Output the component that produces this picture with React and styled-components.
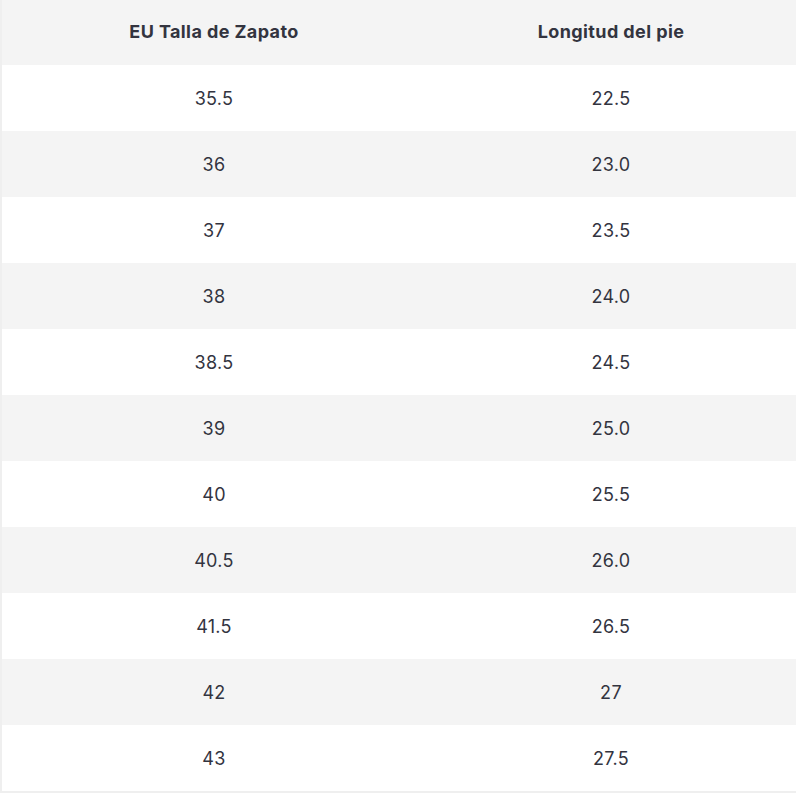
import React from "react";
import styled, { createGlobalStyle } from "styled-components";

const GlobalStyle = createGlobalStyle`
  body {
    margin: 0;
    background: #ffffff;
    font-family: Inter, "Noto Sans", sans-serif;
  }
`;

const Table = styled.div`
  width: 794px;
  border-left: 2px solid #efefef;
  border-bottom: 2px solid #efefef;
  display: grid;
  grid-template-columns: 424px 370px;
`;

const Cell = styled.div`
  height: ${(p) => (p.head ? "65px" : "66px")};
  display: flex;
  align-items: center;
  justify-content: center;
  padding-bottom: ${(p) => (p.head ? "2px" : "0")};
  box-sizing: border-box;
  background: ${(p) => (p.shaded ? "#f4f4f4" : "#ffffff")};
  color: #33343f;
  font-size: 18px;
  letter-spacing: ${(p) => (p.head ? "0.4px" : "0.3px")};
  font-weight: ${(p) => (p.head ? 700 : 400)};
`;

const rows = [
  ["35.5", "22.5"],
  ["36", "23.0"],
  ["37", "23.5"],
  ["38", "24.0"],
  ["38.5", "24.5"],
  ["39", "25.0"],
  ["40", "25.5"],
  ["40.5", "26.0"],
  ["41.5", "26.5"],
  ["42", "27"],
  ["43", "27.5"],
];

const App = () => {
  return (
    <>
      <GlobalStyle />
      <Table>
        <Cell head shaded>EU Talla de Zapato</Cell>
        <Cell head shaded>Longitud del pie</Cell>
        {rows.map(([eu, len], i) => (
          <React.Fragment key={eu}>
            <Cell shaded={i % 2 === 1}>{eu}</Cell>
            <Cell shaded={i % 2 === 1}>{len}</Cell>
          </React.Fragment>
        ))}
      </Table>
    </>
  );
};

export default App;
